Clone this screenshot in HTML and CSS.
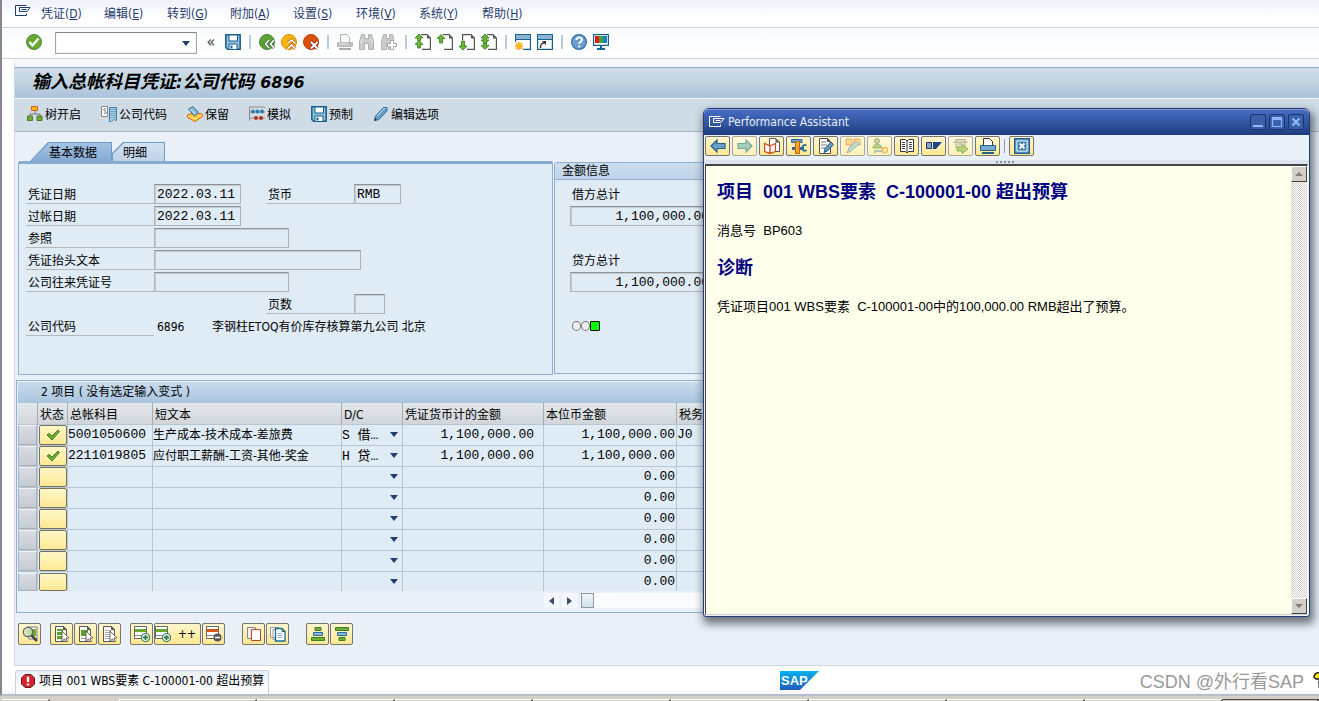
FILE: index.html
```html
<!DOCTYPE html>
<html lang="zh-CN">
<head>
<meta charset="utf-8">
<title>输入总帐科目凭证:公司代码 6896</title>
<link rel="stylesheet" href="styles.css">
</head>
<body>
<svg class="defs" aria-hidden="true">
  <defs>
    <linearGradient id="sapfill" x1="0" y1="0" x2="0" y2="1"><stop offset="0" stop-color="#07b2ee"/><stop offset="1" stop-color="#1d5cbd"/></linearGradient>
    <symbol id="exit" viewBox="0 0 16 16"><path d="M11.500 10.500v2h-11v-10h11M4.500 4.500h10.500l-3 4h-7.500zM6.500 6.500h5" fill="none" stroke="currentColor"/></symbol>
    <symbol id="ok" viewBox="0 0 16 16"><circle cx="8" cy="8" r="7.500" fill="#69a82f" stroke="#4f8a3c"/><path d="M3.500 8l3 3.500 6-7" fill="none" stroke="#fff" stroke-width="2.400"/></symbol>
    <symbol id="save" viewBox="0 0 16 16"><path d="M.8.800h14.400v14.400H2.500L.8 13.500z" fill="#8dbdd8" stroke="#17628f" stroke-width="1.500"/><path d="M4 1h8.500v6H4zM4 10h8v5.500H4z" fill="#fff" stroke="#17628f"/><path d="M5.500 11.500h2v3h-2z" fill="#17628f"/></symbol>
    <symbol id="back" viewBox="0 0 16 16"><circle cx="8" cy="8" r="7.500" fill="#5ba432" stroke="#438838"/><path d="M10 6l-3.500 4L10 14M15 6l-3.500 4L15 14" fill="none" stroke="#4a6a4a" stroke-width="3"/><path d="M10 6l-3.500 4L10 14M15 6l-3.500 4L15 14" fill="none" stroke="#fff" stroke-width="1.500"/></symbol>
    <symbol id="up" viewBox="0 0 16 16"><circle cx="8" cy="8" r="7.500" fill="#fbb40d" stroke="#e28a10"/><path d="M6.500 9.500L10.500 6l4 3.500M6.500 15l4-4 4 4" fill="none" stroke="#ae6a20" stroke-width="3"/><path d="M6.500 9.500L10.500 6l4 3.500M6.500 15l4-4 4 4" fill="none" stroke="#fff" stroke-width="1.500"/></symbol>
    <symbol id="cancel" viewBox="0 0 16 16"><circle cx="8" cy="8" r="7.500" fill="#d8520e" stroke="#ba3d12"/><path d="M8 8l6.500 6.500m0-6.500L8 14.500" stroke="#7b3020" stroke-width="3.600"/><path d="M8 8l6.500 6.500m0-6.500L8 14.500" stroke="#fff" stroke-width="2"/></symbol>
    <symbol id="printgray" viewBox="0 0 16 16"><path d="M3.500 8V.500h6l3 3V8" fill="#fff" stroke="#aaa"/><rect y="8" width="16" height="5" rx="1" fill="#bdbdbd"/><path d="M2 14h12v2H2z" fill="#aaa"/><path d="M2 10h9" stroke="#eee"/></symbol>
    <symbol id="find" viewBox="0 0 16 16"><path d="M2.500.500h3v4h4v-4h3l2 7v8h-5v-6h-4v6h-5v-8z" fill="#ccc" stroke="#b0b0b0"/><path d="M3.500 5l-2 4m10-4l2 4" stroke="#eee"/></symbol>
    <symbol id="findmore" viewBox="0 0 16 16"><path d="M2.500.500h3v4h3v-4h3l1 4v11h-5v-6h-2v6h-5v-8z" fill="#ccc" stroke="#b0b0b0"/><path d="M9.500 6.500h3v3h3v3h-3v3h-3v-3h-3v-3h3z" fill="#fff" stroke="#aaa"/></symbol>
    <symbol id="sheet" viewBox="0 0 16 16"><path d="M6 .600h6l3.400 3.400v11.400H7" fill="#fff" stroke="#555" stroke-width="1.200"/><path d="M12 .500v4h3.500z" fill="#555"/></symbol>
    <symbol id="first" viewBox="0 0 16 16"><use href="#sheet"/><path d="M4 0l4 4H5.500v2.500h-3V4H0zM4 6.500l4 4H5.500V14h-3v-3.500H0z" fill="#6fb52c" stroke="#2f7a2a" stroke-width=".8"/></symbol>
    <symbol id="prev" viewBox="0 0 16 16"><use href="#sheet"/><path d="M4 .500l4 4H5.500V9h-3V4.500H0z" fill="#6fb52c" stroke="#2f7a2a" stroke-width=".8"/></symbol>
    <symbol id="next" viewBox="0 0 16 16"><path d="M3.600 6V.600H12L15.400 4v11.400H8" fill="#fff" stroke="#555" stroke-width="1.200"/><path d="M12 .500v4h3.500z" fill="#555"/><path d="M4 16l4-4H5.500V7h-3v5H0z" fill="#6fb52c" stroke="#2f7a2a" stroke-width=".8"/></symbol>
    <symbol id="last" viewBox="0 0 16 16"><use href="#sheet"/><path d="M4 0l4 4H5.500v2H8l-4 4-4-4h2.500V4H0zM4 15.500l4-4H5.500V9h-3v2.500H0z" fill="#6fb52c" stroke="#2f7a2a" stroke-width=".8"/></symbol>
    <symbol id="win" viewBox="0 0 16 16"><path d="M.6.600h14.800v14.800H.6z" fill="#fff" stroke="#17628f" stroke-width="1.200"/><path d="M1 1h14v4H1z" fill="#8db4d4"/><path d="M1 5.500h14" stroke="#17628f"/></symbol>
    <symbol id="newwin" viewBox="0 0 16 16"><use href="#win"/><path d="M0 8h8v8H0z" fill="#fff"/><path d="M4 8v8M0 12h8M1 9l6 6m0-6l-6 6" stroke="#f59a12" stroke-width="1.400"/><circle cx="4" cy="12" r="2.500" fill="#fdb813"/></symbol>
    <symbol id="shortcut" viewBox="0 0 16 16"><use href="#win"/><path d="M3.500 14c0-4 1-5 4-5" fill="none" stroke="#333" stroke-width="1.500"/><path d="M5 7h4v4z" fill="#333"/></symbol>
    <symbol id="help" viewBox="0 0 16 16"><circle cx="8" cy="8" r="7.400" fill="#6c9ccc" stroke="#346fa8" stroke-width="1.200"/><path d="M5.500 6c0-3.500 5.500-3.300 5.500-.3C11 7.800 8.200 7.500 8.200 10M8.200 11.500v2" fill="none" stroke="#fff" stroke-width="1.900"/></symbol>
    <symbol id="monitor" viewBox="0 0 16 16"><path d="M.6.600h14.800v10.800H.6z" fill="#fff" stroke="#17628f" stroke-width="1.200"/><path d="M2 2h4v7H2z" fill="#e01c12"/><path d="M6 2h4v7H6z" fill="#49a529"/><path d="M10 2h4v7h-4z" fill="#1580d0"/><path d="M7 12h2v2h3v2H4v-2h3z" fill="#17628f"/></symbol>
    <symbol id="tree" viewBox="0 0 16 16"><path d="M8 5v3M3 10V8h10v2" fill="none" stroke="#777"/><path d="M4.500.500h6v4h-6z" fill="#fdb813" stroke="#dd5b1d"/><path d="M.5 10h5v4.500h-5zM10 10h5v4.500h-5z" fill="#72a935" stroke="#467c2c"/></symbol>
    <symbol id="company" viewBox="0 0 16 16"><path d="M.5.500h6v10h-6z" fill="#fff" stroke="#888"/><path d="M4.800 3.200c-2-1-3 .8-1 1.800s2 3-1 2.200" fill="none" stroke="#555"/><path d="M8.500 1.500h7v13l-3-1-2 2h-2z" fill="#a9cde2" stroke="#3d82af"/><path d="M10 3v10M12 3v10M14 3v10" stroke="#3d82af" stroke-dasharray="1 1"/></symbol>
    <symbol id="hold" viewBox="0 0 16 16"><path d="M.5 9L8 6l7.500 2.500v2L8 15.500l-7.500-4z" fill="#fdc22a" stroke="#e2670c"/><path d="M1 10l7 3 7-4" fill="none" stroke="#fff0b0"/><path d="M1.500 3l4.500-2.500 5.500 6-4 3.500z" fill="#8bb8d8" stroke="#316f9f"/><path d="M3 3l5 5" stroke="#dcecf6"/></symbol>
    <symbol id="simulate" viewBox="0 0 16 16"><path d="M.5 15V1h15v1M1 6h15M1 12h15" fill="none" stroke="#888"/><g fill="#287da8"><circle cx="4" cy="5.500" r="1.900"/><circle cx="8.500" cy="5.500" r="1.900"/><circle cx="13" cy="5.500" r="1.900"/></g><g fill="#c02e1b"><circle cx="7" cy="12" r="2"/><circle cx="12" cy="12" r="2"/></g></symbol>
    <symbol id="pencil" viewBox="0 0 16 16"><path d="M1.500 14.500l1-4.500 8-8.500h3.500v3.500l-8 8.500z" fill="#5f9ecb" stroke="#39709c"/><path d="M4 10l8-8" stroke="#cce4f4"/><path d="M1 15l1-3 2 2z" fill="#333"/></symbol>
    <symbol id="check" viewBox="0 0 16 16"><path d="M2 8l2-1.500 3 2.500 6-6 1.500 1.500L7 13z" fill="#69af28" stroke="#49743c"/></symbol>
    <symbol id="page" viewBox="0 0 16 16"><path d="M1.500.500h8l3 3v12h-11z" fill="#fff" stroke="#555"/><path d="M9.500.500v3h3z" fill="#555" stroke="#555"/></symbol>
    <symbol id="cursor" viewBox="0 0 16 16"><path d="M8 5l7 7-3 .3 1.500 3-1.500.7-1.500-3L8 15z" fill="#fff" stroke="#555" stroke-width=".9"/></symbol>
    <symbol id="detail" viewBox="0 0 16 16"><path d="M5 1h10v12H7z" fill="#fff" stroke="#777"/><path d="M7 3h7v7H7z" fill="#70ad2d"/><circle cx="6" cy="6" r="4.700" fill="#cfe4bd" fill-opacity=".8" stroke="#666" stroke-width="1.300"/><path d="M9.500 9.500L15 15" stroke="#444" stroke-width="2.500"/></symbol>
    <symbol id="selall" viewBox="0 0 16 16"><use href="#page"/><path d="M3 3h6v2H3zM3 6h6v3H3zM3 10h6v3H3z" fill="#5aa12c"/><use href="#cursor"/></symbol>
    <symbol id="selblock" viewBox="0 0 16 16"><use href="#page"/><path d="M3 4h7v6H3z" fill="#5aa12c"/><path d="M3 12.500h6" stroke="#999"/><use href="#cursor"/></symbol>
    <symbol id="desel" viewBox="0 0 16 16"><use href="#page"/><path d="M3 4.500h6m-6 2h6m-6 2h6m-6 2h6m-6 2h6" stroke="#aaa"/><use href="#cursor"/></symbol>
    <symbol id="insert" viewBox="0 0 16 16"><path d="M.5.500h12v12H.5z" fill="#fff" stroke="#666"/><path d="M1 3h11v3H1z" fill="#68aa2b"/><path d="M1 9.500h11" stroke="#888"/><circle cx="11.500" cy="11.500" r="4" fill="#fff" stroke="#2f7d4a" stroke-width="1.200"/><path d="M11.500 9v5m-2.500-2.500h5" stroke="#2f7d4a" stroke-width="1.800"/></symbol>
    <symbol id="remove" viewBox="0 0 16 16"><path d="M.5.500h12v12H.5z" fill="#fff" stroke="#666"/><path d="M1 3h11v3H1z" fill="#dc5518"/><path d="M1 9.500h11" stroke="#888"/><circle cx="11.500" cy="11.500" r="4" fill="#555"/><path d="M9 11.500h5" stroke="#fff" stroke-width="1.600"/></symbol>
    <symbol id="copy" viewBox="0 0 16 16"><path d="M1.500 1.500h8v11h-8z" fill="#eee" stroke="#888"/><path d="M5.500 3.500h9v11h-9z" fill="#fff" stroke="#bd412d"/></symbol>
    <symbol id="paste" viewBox="0 0 16 16"><path d="M.5 1.500h8v10h-8zM3 3.500h6v10H3z" fill="#fff" stroke="#999"/><path d="M5.500 2.500h6.500l3 3v9.500H5.500z" fill="#fff" stroke="#176996" stroke-width="1.300"/><path d="M12 2.500v3h3z" fill="#fdb813" stroke="#176996"/><path d="M7.500 7.500h5m-5 2h5m-5 2h5" fill="none" stroke="#86b4d0"/></symbol>
    <symbol id="asc" viewBox="0 0 16 16"><path d="M5 1.500h6v3H5zM1.500 11.500h13v3h-13z" fill="#71ae32" stroke="#397d2d"/><path d="M3.500 6.500h9v3h-9z" fill="#8ab9d8" stroke="#286d9b"/></symbol>
    <symbol id="desc" viewBox="0 0 16 16"><path d="M1.500 1.500h13v3h-13zM5 11.500h6v3H5z" fill="#71ae32" stroke="#397d2d"/><path d="M3.500 6.500h9v3h-9z" fill="#8ab9d8" stroke="#286d9b"/></symbol>
    <symbol id="error" viewBox="0 0 16 16"><path d="M5 1.500h6L14.500 5v6L11 14.500H5L1.500 11V5z" fill="#d92027" stroke="#5e1820"/><path d="M8 3.500v5.500M8 10.500v2" stroke="#fff" stroke-width="2.400"/></symbol>
    <symbol id="left" viewBox="0 0 16 16"><path d="M1 8l6-6v3.500h8v5H7V14z" fill="#67a1cb" stroke="#27608b" stroke-width="1.200"/></symbol>
    <symbol id="right" viewBox="0 0 16 16"><path d="M15 8L9 2v3.500H1v5h8V14z" fill="#91c2b6" stroke="#519596" stroke-width="1.200"/></symbol>
    <symbol id="book" viewBox="0 0 16 16"><path d="M5.500.500h6.500l3.500 3.500v9.500h-10z" fill="#fff" stroke="#555"/><path d="M11.500.500v4h4z" fill="#555"/><path d="M.6 5.500L6 8v7.400L.6 13.500zM11.500 5.500L6 8v7.400l5.500-1.900z" fill="#fff" stroke="#d04a20" stroke-width="1.300"/></symbol>
    <symbol id="tools" viewBox="0 0 16 16"><path d="M.6 1.500h10.400v3H.6z" fill="#6a9fc5" stroke="#286d9b"/><path d="M1 10.500h4M9 10.500h4" stroke="#286d9b" stroke-width="3"/><path d="M4.500 3.500h4v12h-4z" fill="#fba11c" stroke="#bd671d"/><path d="M15.500 7.500c-2.500-1.500-4.500.5-4 3s2.500 3 4 1.500" fill="none" stroke="#286d9b" stroke-width="1.800"/></symbol>
    <symbol id="edit" viewBox="0 0 16 16"><use href="#page"/><path d="M3 4h5M3 7h6M3 10h4" stroke="#777"/><path d="M6 14.500l1-4 6-6.500 2.500 2.500-6 6.500z" fill="#5d9cc5" stroke="#275b80"/></symbol>
    <symbol id="notes" viewBox="0 0 16 16"><path d="M1 1h6v6H1zM9 1h6v6H9z" fill="#ffd878" stroke="#e9904e"/><path d="M2 15l2-5 7-7 3 3-8 7z" fill="#b5d5cf" stroke="#7aaaa4"/></symbol>
    <symbol id="userkey" viewBox="0 0 16 16"><circle cx="5" cy="3" r="2.500" fill="#bdd08d" stroke="#81a361"/><path d="M1 10c0-5 8-5 9 0z" fill="#a9c776" stroke="#7ca95d"/><circle cx="13" cy="12" r="2.600" fill="none" stroke="#f3ab3c" stroke-width="1.500"/><path d="M10 13H3v2" fill="none" stroke="#7fada9" stroke-width="1.600"/></symbol>
    <symbol id="openbook" viewBox="0 0 16 16"><path d="M8 3L6.500 1.500h-5v12h5L8 15l1.500-1.500h5v-12h-5zM8 3v11" fill="#fff" stroke="#333"/><path d="M3 4.500h3m-3 2h3m-3 2h3m-3 2h3m4-6h3m-3 2h3m-3 2h3m-3 2h3" stroke="#444"/></symbol>
    <symbol id="flag" viewBox="0 0 16 16"><path d="M.5 4.500h5v6h-5z" fill="#8aa4cf" stroke="#183568"/><path d="M7 4h9l-6 7H7z" fill="#1d458e"/></symbol>
    <symbol id="transport" viewBox="0 0 16 16"><path d="M3 1.500h9v8H3zM0 4h15M5 6h5" fill="#eee8b4" stroke="#94988b"/><path d="M4 9h5V6.500l6 4.500-6 4.500V13H4z" fill="#a9cc61" stroke="#71a253"/></symbol>
    <symbol id="print" viewBox="0 0 16 16"><path d="M3.500 8V.500h6l3 3V8" fill="#fff" stroke="#333"/><path d="M.5 7.500h15v5H.5z" fill="#75acd0" stroke="#27638e"/><path d="M2 14h12v2H2z" fill="#27638e"/></symbol>
    <symbol id="closebox" viewBox="0 0 16 16"><path d="M.7.700h14.600v14.600H.7z" fill="#7fb4d6" stroke="#21618e" stroke-width="1.400"/><path d="M3 3h10v10H3z" fill="#3d7daa" stroke="#e6f2f8"/><path d="M5.500 5.500l5 5m0-5l-5 5" stroke="#fff" stroke-width="1.800"/></symbol>
  </defs>
</svg>

<div class="window">
  <nav class="menu" aria-label="菜单">
    <button class="menu-icon" aria-label="系统菜单"><svg class="icon"><use href="#exit"/></svg></button>
    <button class="menu-item">凭证(<u>D</u>)</button>
    <button class="menu-item">编辑(<u>E</u>)</button>
    <button class="menu-item">转到(<u>G</u>)</button>
    <button class="menu-item">附加(<u>A</u>)</button>
    <button class="menu-item">设置(<u>S</u>)</button>
    <button class="menu-item">环境(<u>V</u>)</button>
    <button class="menu-item">系统(<u>Y</u>)</button>
    <button class="menu-item">帮助(<u>H</u>)</button>
  </nav>

  <div class="toolbar">
    <button class="flat" aria-label="回车"><svg class="icon"><use href="#ok"/></svg></button>
    <div class="combo">
      <input type="text" aria-label="命令">
      <button class="flat combo-arrow" aria-label="打开列表"><i class="triangle"></i></button>
    </div>
    <button class="flat collapse" aria-label="收起">«</button>
    <button class="flat" aria-label="保存"><svg class="icon"><use href="#save"/></svg></button>
    <i class="sep"></i>
    <button class="flat" aria-label="返回"><svg class="icon"><use href="#back"/></svg></button>
    <button class="flat" aria-label="退出"><svg class="icon"><use href="#up"/></svg></button>
    <button class="flat" aria-label="取消"><svg class="icon"><use href="#cancel"/></svg></button>
    <i class="sep"></i>
    <button class="flat" aria-label="打印"><svg class="icon"><use href="#printgray"/></svg></button>
    <button class="flat" aria-label="查找"><svg class="icon"><use href="#find"/></svg></button>
    <button class="flat" aria-label="继续查找"><svg class="icon"><use href="#findmore"/></svg></button>
    <i class="sep"></i>
    <button class="flat" aria-label="第一页"><svg class="icon"><use href="#first"/></svg></button>
    <button class="flat" aria-label="上一页"><svg class="icon"><use href="#prev"/></svg></button>
    <button class="flat" aria-label="下一页"><svg class="icon"><use href="#next"/></svg></button>
    <button class="flat" aria-label="最后一页"><svg class="icon"><use href="#last"/></svg></button>
    <i class="sep"></i>
    <button class="flat" aria-label="新窗口"><svg class="icon"><use href="#newwin"/></svg></button>
    <button class="flat" aria-label="快捷方式"><svg class="icon"><use href="#shortcut"/></svg></button>
    <i class="sep"></i>
    <button class="flat" aria-label="帮助"><svg class="icon"><use href="#help"/></svg></button>
    <button class="flat" aria-label="布局"><svg class="icon"><use href="#monitor"/></svg></button>
  </div>

  <main class="screen">
    <h1 class="title">输入总帐科目凭证:公司代码 <span class="title-code">6896</span></h1>
    <div class="actions">
      <button class="action"><svg class="icon"><use href="#tree"/></svg>树开启</button>
      <button class="action"><svg class="icon"><use href="#company"/></svg>公司代码</button>
      <button class="action"><svg class="icon"><use href="#hold"/></svg>保留</button>
      <button class="action"><svg class="icon"><use href="#simulate"/></svg>模拟</button>
      <button class="action"><svg class="icon"><use href="#save"/></svg>预制</button>
      <button class="action"><svg class="icon"><use href="#pencil"/></svg>编辑选项</button>
    </div>

    <div class="panels">
      <section class="basic">
        <div class="tabs" role="tablist">
          <button class="tab tab-active" role="tab" aria-selected="true">基本数据</button>
          <button class="tab tab-second" role="tab" aria-selected="false">明细</button>
        </div>
        <div class="tab-panel">
          <div class="field"><label class="label" for="docdate">凭证日期</label><input class="box w-date" id="docdate" value="2022.03.11" readonly>
            <label class="label label-mid" for="currency">货币</label><input class="box w-cur" id="currency" value="RMB" readonly></div>
          <div class="field"><label class="label" for="postdate">过帐日期</label><input class="box w-date" id="postdate" value="2022.03.11" readonly></div>
          <div class="field"><label class="label" for="ref">参照</label><input class="box w-ref" id="ref"></div>
          <div class="field"><label class="label" for="headtext">凭证抬头文本</label><input class="box w-text" id="headtext"></div>
          <div class="field"><label class="label" for="cross">公司往来凭证号</label><input class="box w-ref" id="cross"></div>
          <div class="field field-right"><label class="label label-mid" for="pages">页数</label><input class="box w-page" id="pages"></div>
          <div class="field"><span class="label">公司代码</span><span class="code">6896</span><span>李钢柱ETOQ有价库存核算第九公司 北京</span></div>
        </div>
      </section>
      <section class="amounts">
        <h2 class="amounts-title">金额信息</h2>
        <div class="amounts-body">
          <label class="amount-label" for="debit">借方总计</label>
          <input class="box amount" id="debit" value="1,100,000.00" readonly>
          <label class="amount-label amount-second" for="credit">贷方总计</label>
          <input class="box amount" id="credit" value="1,100,000.00" readonly>
          <div class="lights"><i class="light"></i><i class="light"></i><i class="light-on"></i></div>
        </div>
      </section>
    </div>

    <section class="items">
      <h2 class="items-title">2 项目 ( 没有选定输入变式 )</h2>
      <table class="grid">
        <colgroup><col class="c-sel"><col class="c-stat"><col class="c-acct"><col class="c-text"><col class="c-dc"><col class="c-amt"><col class="c-loc"><col></colgroup>
        <thead><tr><th></th><th>状态</th><th>总帐科目</th><th>短文本</th><th>D/C</th><th>凭证货币计的金额</th><th>本位币金额</th><th>税务</th></tr></thead>
        <tbody>
          <tr><td><button class="rowsel" aria-label="选择行"></button></td><td><button class="state" aria-label="正确"><svg class="icon"><use href="#check"/></svg></button></td><td class="mono">5001050600</td><td>生产成本-技术成本-差旅费</td><td class="dc"><select aria-label="D/C"><option>S 借…</option></select></td><td class="mono num num-doc">1,100,000.00</td><td class="mono num">1,100,000.00</td><td class="mono">J0</td></tr>
          <tr><td><button class="rowsel" aria-label="选择行"></button></td><td><button class="state" aria-label="正确"><svg class="icon"><use href="#check"/></svg></button></td><td class="mono">2211019805</td><td>应付职工薪酬-工资-其他-奖金</td><td class="dc"><select aria-label="D/C"><option>H 贷…</option></select></td><td class="mono num num-doc">1,100,000.00</td><td class="mono num">1,100,000.00</td><td></td></tr>
          <tr><td><button class="rowsel" aria-label="选择行"></button></td><td><button class="state" aria-label="状态"></button></td><td></td><td></td><td class="dc"><select aria-label="D/C"><option></option></select></td><td></td><td class="mono num">0.00</td><td></td></tr>
          <tr><td><button class="rowsel" aria-label="选择行"></button></td><td><button class="state" aria-label="状态"></button></td><td></td><td></td><td class="dc"><select aria-label="D/C"><option></option></select></td><td></td><td class="mono num">0.00</td><td></td></tr>
          <tr><td><button class="rowsel" aria-label="选择行"></button></td><td><button class="state" aria-label="状态"></button></td><td></td><td></td><td class="dc"><select aria-label="D/C"><option></option></select></td><td></td><td class="mono num">0.00</td><td></td></tr>
          <tr><td><button class="rowsel" aria-label="选择行"></button></td><td><button class="state" aria-label="状态"></button></td><td></td><td></td><td class="dc"><select aria-label="D/C"><option></option></select></td><td></td><td class="mono num">0.00</td><td></td></tr>
          <tr><td><button class="rowsel" aria-label="选择行"></button></td><td><button class="state" aria-label="状态"></button></td><td></td><td></td><td class="dc"><select aria-label="D/C"><option></option></select></td><td></td><td class="mono num">0.00</td><td></td></tr>
          <tr><td><button class="rowsel" aria-label="选择行"></button></td><td><button class="state" aria-label="状态"></button></td><td></td><td></td><td class="dc"><select aria-label="D/C"><option></option></select></td><td></td><td class="mono num">0.00</td><td></td></tr>
        </tbody>
      </table>
      <div class="hscroll">
        <button class="hs-btn" aria-label="向左"><i class="tri-left"></i></button>
        <button class="hs-btn" aria-label="向右"><i class="tri-right"></i></button>
        <div class="hs-track"><i class="hs-thumb"></i></div>
      </div>
    </section>

    <div class="item-actions">
      <div class="group"><button class="gold" aria-label="明细"><svg class="icon"><use href="#detail"/></svg></button></div>
      <div class="group"><button class="gold" aria-label="全选"><svg class="icon"><use href="#selall"/></svg></button><button class="gold" aria-label="选择块"><svg class="icon"><use href="#selblock"/></svg></button><button class="gold" aria-label="取消选择"><svg class="icon"><use href="#desel"/></svg></button></div>
      <div class="group group-wide"><button class="gold" aria-label="插入行"><svg class="icon"><use href="#insert"/></svg></button><button class="gold gold-long"><svg class="icon"><use href="#insert"/></svg><span>++</span></button><button class="gold" aria-label="删除行"><svg class="icon"><use href="#remove"/></svg></button></div>
      <div class="group group-wide"><button class="gold" aria-label="复制"><svg class="icon"><use href="#copy"/></svg></button><button class="gold" aria-label="复制字段"><svg class="icon"><use href="#paste"/></svg></button></div>
      <div class="group"><button class="gold" aria-label="升序"><svg class="icon"><use href="#asc"/></svg></button><button class="gold" aria-label="降序"><svg class="icon"><use href="#desc"/></svg></button></div>
    </div>
  </main>

  <footer class="status">
    <div class="message"><svg class="icon"><use href="#error"/></svg>项目 001 WBS要素 C-100001-00 超出预算</div>
    <svg class="logo" viewBox="0 0 39 19" role="img" aria-label="SAP"><path d="M0 0h39L20 19H0z" fill="url(#sapfill)"/><text class="logo-text" x="1" y="14">SAP</text></svg>
    <div class="watermark">CSDN @外行看SAP</div>
    <div class="assist"><svg width="16" height="16" viewBox="0 0 16 16"><path d="M1 5.500C1 1 5 0 8 1s5 2 5 6-3 4-3 5H6V9l3-2-1-2-2 2H3z" fill="#ffe800" stroke="#111" stroke-width="1.300"/><path d="M6 13h4v3H6z" fill="#ffe800" stroke="#111"/></svg></div>
  </footer>
</div>
<div class="taskbar"><i class="quick"></i><i class="task"></i><i class="task"></i><i class="task"></i><i class="task"></i><i class="task"></i><i class="task"></i><i class="task"></i><i class="task"></i><i class="task-on"></i></div>

<section class="dialog" role="dialog" aria-labelledby="dlgtitle">
  <header class="dlg-head">
    <svg class="icon"><use href="#exit"/></svg>
    <span class="dlg-title" id="dlgtitle">Performance Assistant</span>
    <button class="wbtn" aria-label="最小化"><svg viewBox="0 0 14 14"><path d="M2 11h10" stroke="#8bb5ff" stroke-width="2"/></svg></button>
    <button class="wbtn" aria-label="最大化"><svg viewBox="0 0 14 14"><path d="M2.500 3v8.500h9V3M2 3.500h10" fill="none" stroke="#8bb5ff" stroke-width="1.200"/><path d="M2 2h10v3H2z" fill="#8bb5ff"/></svg></button>
    <button class="wbtn" aria-label="关闭"><svg viewBox="0 0 14 14"><path d="M3.500 3.500l7 7m0-7l-7 7" stroke="#8bb5ff" stroke-width="2.400"/></svg></button>
  </header>
  <div class="dlg-tools">
    <button class="gold" aria-label="后退"><svg class="icon"><use href="#left"/></svg></button>
    <button class="gold dim" aria-label="前进"><svg class="icon"><use href="#right"/></svg></button>
    <button class="gold" aria-label="应用帮助"><svg class="icon"><use href="#book"/></svg></button>
    <button class="gold" aria-label="定制"><svg class="icon"><use href="#tools"/></svg></button>
    <button class="gold" aria-label="编辑"><svg class="icon"><use href="#edit"/></svg></button>
    <button class="gold dim" aria-label="注释"><svg class="icon"><use href="#notes"/></svg></button>
    <button class="gold dim" aria-label="权限"><svg class="icon"><use href="#userkey"/></svg></button>
    <button class="gold" aria-label="词汇表"><svg class="icon"><use href="#openbook"/></svg></button>
    <button class="gold" aria-label="技术信息"><svg class="icon"><use href="#flag"/></svg></button>
    <button class="gold dim" aria-label="转移"><svg class="icon"><use href="#transport"/></svg></button>
    <button class="gold" aria-label="打印"><svg class="icon"><use href="#print"/></svg></button>
    <i class="dlg-sep"></i>
    <button class="gold" aria-label="关闭帮助"><svg class="icon"><use href="#closebox"/></svg></button>
  </div>
  <div class="grip"></div>
  <div class="dlg-body">
    <article class="doc">
      <h2>项目&nbsp; 001 WBS要素&nbsp; C-100001-00 超出预算</h2>
      <p>消息号&nbsp; BP603</p>
      <h2>诊断</h2>
      <p>凭证项目001 WBS要素&nbsp; C-100001-00中的100,000.00 RMB超出了预算。</p>
    </article>
    <div class="vscroll"><button class="vs-btn" aria-label="向上"><i class="tri-up"></i></button><button class="vs-btn" aria-label="向下"><i class="tri-down"></i></button></div>
  </div>
</section>
</body>
</html>
```
FILE: styles.css
```css
* { box-sizing: border-box; }
html, body { height: 100%; }
body {
  margin: 0;
  display: flex;
  flex-direction: column;
  position: relative;
  overflow: hidden;
  background: #fff;
  color: #000;
  font: 12px/16px "DejaVu Sans Condensed", "Noto Sans", "Noto Sans CJK SC", sans-serif;
}
button, input, select { font: inherit; color: inherit; border-radius: 0; }
button { padding: 0; border: 0; background: none; }
h1, h2, p { margin: 0; font-weight: normal; }
.defs { position: absolute; width: 0; height: 0; }
.icon { width: 16px; height: 16px; flex: none; display: block; }

.window {
  flex: 1;
  min-height: 0;
  display: flex;
  flex-direction: column;
  border-left: 2px solid #85878b;
  border-bottom: 2px solid #b4bfca;
}

/* Menu and system toolbar */
.menu {
  height: 28px;
  flex: none;
  display: flex;
  align-items: center;
  padding-left: 12px;
  background: linear-gradient(#eef3fa, #fff 70%);
  border-bottom: 1px solid #cdd6df;
  color: #1f3a6e;
}
.menu-icon { width: 27px; padding: 0 0 6px 1px; }
.menu-item { flex: 0 1 63px; text-align: left; }
.toolbar {
  height: 31px;
  flex: none;
  display: flex;
  align-items: center;
  gap: 6px;
  padding-left: 24px;
  padding-bottom: 4px;
  background: linear-gradient(#fafbfd, #fff);
  border-bottom: 1px solid #cdd6df;
}
.combo {
  width: 142px;
  height: 22px;
  margin: 4px 0 0 7px;
  display: flex;
  border: 1px solid #a2a4a8;
  border-top-color: #85878b;
  box-shadow: inset 0 0 1px #a2a4a8;
  background: #fff;
}
.combo input { flex: 1; min-width: 0; border: 0; padding: 0 4px; outline: 0; background: none; }
.combo-arrow { width: 20px; display: flex; align-items: center; justify-content: center; }
.triangle { border: 4px solid transparent; border-top: 5px solid #223d70; border-bottom: 0; }
.flat { margin-top: 2px; }
.combo .flat { margin-top: 0; }
.collapse { width: 16px; font-size: 16px; color: #444; line-height: 14px; }
.sep { width: 2px; height: 14px; margin: 2px 2px 0; background: #bacbdc; }

/* Screen */
.screen {
  flex: 1;
  min-height: 0;
  margin: 0 0 0 12px;
  border-left: 1px solid #ccd8e8;
  border-bottom: 1px solid #cdd6df;
  border-top: 8px solid #f3f7fb;
  background: #e9f0f7;
}
.title {
  height: 31px;
  padding: 0 17px;
  border-top: 1px solid #93a9c1;
  background: linear-gradient(#cfdfec, #c3d3e0 45%, #aac2dd);
  font-size: 18px;
  line-height: 27px;
  font-weight: bold;
  font-style: italic;
}
.title-code { font-family: "DejaVu Sans", sans-serif; font-size: 16px; }
.actions {
  height: 34px;
  display: flex;
  align-items: center;
  gap: 20px;
  padding-left: 12px;
  border-top: 1px solid #f2f6fa;
  border-bottom: 1px solid #a0b3c7;
  background: #cfdce6;
}
.action { display: flex; align-items: center; gap: 2px; }
.action .icon { margin-bottom: 2px; }

.panels { display: flex; gap: 1px; padding: 10px 12px 0 3px; }
.basic { flex: 0 0 535px; display: flex; flex-direction: column; }
.tabs { display: flex; padding-left: 12px; height: 19px; }
.tab {
  position: relative;
  isolation: isolate;
  height: 19px;
  text-align: left;
  background: #6f9bc6;
  line-height: 22px;
}
.tab::before {
  content: "";
  position: absolute;
  inset: 1px 1px 0 1px;
  z-index: -1;
}
.tab-active { width: 82px; padding-left: 19px; clip-path: polygon(18px 0, 100% 0, 100% 100%, 0 100%); }
.tab-active::before { background: linear-gradient(#a3c3e5, #86aad4); clip-path: polygon(18px 0, 100% 0, 100% 100%, 0 100%); }
.tab-second { width: 53px; padding-left: 11px; clip-path: polygon(11px 0, 100% 0, 100% 100%, 0 100%, 0 11px); }
.tab-second::before { background: linear-gradient(#d3e2f0, #bdd2e8); clip-path: polygon(11px 0, 100% 0, 100% 100%, 0 100%, 0 11px); }
.tab-panel {
  min-height: 214px;
  display: flex;
  flex-direction: column;
  gap: 2px;
  padding: 20px 7px 8px;
  border: 1px solid #8fb0d3;
  border-top: 3px solid #85abd3;
  border-radius: 2px 2px 0 0;
  background: #dfebf5;
}
.field { display: flex; height: 20px; }
.field-right { padding-left: 240px; }
.field > span { line-height: 22px; }
.label {
  width: 128px;
  flex: none;
  padding-left: 2px;
  border-bottom: 1px solid #b4b8bb;
  line-height: 22px;
}
.label-mid { width: 88px; }
.w-date + .label-mid { margin-left: 25px; }
.code { width: 58px; padding-left: 3px; }
.box {
  height: 20px;
  padding: 0 2px;
  border: 1px solid #b0b2b4;
  border-top-color: #8e9194;
  box-shadow: inset 1px 1px 1px #c2cbd2;
  background: #dfebf5;
  outline: 0;
  font: 13px/18px "Liberation Mono", monospace;
}
.w-date { width: 87px; }
.w-cur { width: 47px; }
.w-ref { width: 135px; }
.w-text { width: 207px; }
.w-page { width: 31px; }

.amounts {
  flex: 1;
  margin: 20px 0 1px;
  border: 1px solid #8fb0d3;
  border-radius: 3px 3px 0 0;
  background: #dfebf5;
}
.amounts-title {
  height: 17px;
  padding-left: 7px;
  border-bottom: 1px solid #8fb0d3;
  background: linear-gradient(#cdddee, #bfd4e9);
  font-size: 12px;
  line-height: 17px;
}
.amounts-body { display: flex; flex-direction: column; align-items: flex-start; gap: 2px; padding: 4px 15px; }
.amount-label { height: 20px; padding-left: 2px; line-height: 22px; }
.amount-second { margin-top: 22px; }
.amount { width: 142px; text-align: right; }
.lights { display: flex; margin: 27px 0 0 2px; }
.light, .light-on { width: 10px; height: 10px; border: 1px solid #777; border-radius: 50%; background: #eee; }
.light { width: 9px; }
.light-on { border-color: #000; border-radius: 1px; background: #0f0; }

/* Line items */
.items { margin: 5px 12px 0 1px; padding: 1px; border: 1px solid #8fb0d3; }
.items-title {
  height: 21px;
  padding-left: 23px;
  background: linear-gradient(#c9dcec, #aac4df);
  font-size: 12px;
  line-height: 20px;
  word-spacing: 0;
}
.grid { width: 100%; table-layout: fixed; border-spacing: 0; }
.c-sel { width: 20px; }
.c-stat { width: 30px; }
.c-acct { width: 85px; }
.c-text { width: 189px; }
.c-dc { width: 61px; }
.c-amt { width: 141px; }
.c-loc { width: 133px; }
.grid th {
  height: 22px;
  padding: 2px 0 0 2px;
  text-align: left;
  font-weight: normal;
  white-space: nowrap;
  border-right: 1px solid #a3adb8;
  border-bottom: 1px solid #b8c4ce;
  background: linear-gradient(#e4e8eb, #d0d5da);
  line-height: 18px;
}
.grid td {
  height: 21px;
  padding: 0;
  border-right: 1px solid #b8c6d4;
  border-bottom: 1px solid #b8c6d4;
  background: #dfebf5;
  line-height: 20px;
  white-space: nowrap;
}
.grid tr:last-child td { height: 19px; border-bottom: 0; line-height: 18px; }
.grid td.mono, .dc select { font-family: "Liberation Mono", "Noto Sans CJK SC", monospace; font-size: 13px; }
.grid td.num { text-align: right; padding-right: 1px; }
.grid td.num-doc { padding-right: 9px; }
.rowsel {
  display: block;
  width: 19px;
  height: 20px;
  border: 1px solid #a9b1bd;
  border-top-color: #f0f3f6;
  background: linear-gradient(#d8dce2, #c5cbd5);
}
.state {
  display: flex;
  align-items: center;
  justify-content: center;
  width: 28px;
  height: 20px;
  margin-left: 1px;
  border: 1px solid #74725f;
  border-radius: 2px;
  background: linear-gradient(#fff7c8, #ffe994);
}
tr:last-child .rowsel, tr:last-child .state { height: 18px; }
.dc { position: relative; }
.dc select { display: block; width: 100%; height: 18px; padding: 0; border: 0; outline: 0; appearance: none; background: none; }
.dc::after {
  content: "";
  position: absolute;
  right: 4px;
  top: 7px;
  border: 4px solid transparent;
  border-top: 5px solid #223d70;
  border-bottom: 0;
  pointer-events: none;
}
.hscroll { display: flex; gap: 3px; padding: 2px 0 3px 526px; height: 20px; }
.hs-btn { width: 15px; background: #f3f6fa; display: flex; align-items: center; justify-content: center; }
.tri-left { border: 4px solid transparent; border-right: 5px solid #3c5068; border-left: 0; }
.tri-right { border: 4px solid transparent; border-left: 5px solid #3c5068; border-right: 0; }
.hs-track { flex: 1; margin-left: 1px; background: #fafbfc; }
.hs-thumb { display: block; width: 13px; height: 15px; border: 1px solid #8b9aaa; background: linear-gradient(#f2f6fa, #d3dee8); }

.item-actions { display: flex; gap: 9px; padding: 10px 0 0 3px; }
.group { display: flex; gap: 1px; }
.group-wide { margin-right: 8px; }
.gold {
  width: 23px;
  height: 22px;
  display: flex;
  align-items: center;
  justify-content: center;
  border: 1px solid #77756a;
  border-radius: 2px;
  background: linear-gradient(#fff6cf, #ffe892);
}
.gold-long { width: 47px; justify-content: space-between; padding: 0 4px 0 0; }

/* Status bar */
.status {
  height: 28px;
  flex: none;
  display: grid;
  grid-template-columns: 765px 1fr auto 10px;
  align-items: center;
  padding-left: 13px;
  background: linear-gradient(#fff 70%, #f5f6f8);
}
.message {
  height: 24px;
  justify-self: start;
  align-self: end;
  display: flex;
  align-items: center;
  gap: 3px;
  padding: 0 4px 3px;
  border: 1px solid #c6d1e0;
  border-bottom: 0;
  border-radius: 3px 3px 0 0;
  background: linear-gradient(#eaf0f7, #fff);
}
.logo { width: 39px; height: 19px; }
.logo-text { font: bold 13px "Liberation Sans", sans-serif; fill: #fff; }
.watermark { padding: 4px 5px 0 0; color: #999; font: 18px/24px "Liberation Sans", "Noto Sans CJK SC", sans-serif; }
.assist { overflow: hidden; width: 6px; height: 16px; justify-self: end; }

/* Taskbar edge */
.taskbar { height: 5px; flex: none; display: flex; padding-top: 3px; background: #d4d0c8; overflow: hidden; }
.quick, .task, .task-on { flex: none; border-top: 1px solid #fff; border-right: 2px solid #5b5955; }
.quick { width: 48px; margin: 0 69px 0 2px; }
.task { width: 138px; border-left: 1px solid #fff; }
.task-on { flex: 1; border-top-color: #444; }

/* Performance Assistant window */
.dialog {
  position: absolute;
  left: 703px;
  right: 9px;
  top: 108px;
  bottom: 84px;
  display: flex;
  flex-direction: column;
  border: 1px solid #223c74;
  border-radius: 6px 6px 3px 3px;
  background: #e9f0f7;
  box-shadow: 2px 5px 9px 2px rgba(45, 50, 60, .65);
}
.dlg-head {
  height: 26px;
  flex: none;
  display: flex;
  align-items: center;
  gap: 3px;
  padding: 0 5px 2px;
  border-top: 1px solid #7f9bdc;
  border-radius: 5px 5px 0 0;
  background: linear-gradient(#476bc4, #31559f 55%, #1c3a7b);
  color: #fff;
}
.dlg-title { flex: 1; color: #e6ecf8; }
.wbtn { width: 16px; height: 16px; border: 1px solid #1a3470; border-radius: 2px; background: #3b60a8; }
.wbtn svg { display: block; }
.dlg-tools { display: flex; gap: 2px; padding: 1px 1px 0; }
.dlg-tools .gold { width: 25px; height: 20px; }
.gold.dim { border-color: #aba98f; background: linear-gradient(#fff9de, #fff0b8); }
.dim .icon { opacity: .8; }
.dlg-sep { width: 1px; height: 14px; margin: 3px 2px 0; background: #909aa4; }
.grip { height: 8px; flex: none; background: #dbe4ec; background-clip: content-box; padding-top: 4px; position: relative; }
.grip::after {
  content: "";
  position: absolute;
  left: 50%;
  bottom: 1px;
  width: 18px;
  height: 2px;
  margin-left: -11px;
  background: repeating-linear-gradient(90deg, #8b959e 0 2px, transparent 2px 4px);
}
.dlg-body {
  flex: 1;
  min-height: 0;
  display: flex;
  margin: 0 1px 1px;
  border: 1px solid #444;
  border-width: 2px 1px 1px;
  border-right-color: #fff;
  border-bottom-color: #d4d0c8;
  background: #ffffec;
}
.doc { flex: 1; padding: 14px 11px; font: 13px/20px "Liberation Sans", "Noto Sans CJK SC", sans-serif; }
.doc h2 { color: #000080; font-size: 18px; font-weight: bold; line-height: 24px; }
.doc p { margin: 17px 0 15px; }
.vscroll {
  width: 16px;
  display: flex;
  flex-direction: column;
  justify-content: space-between;
  background: repeating-conic-gradient(#d4d0c8 0 25%, #fff 0 50%) 0 0 / 2px 2px;
}
.vs-btn {
  height: 16px;
  display: flex;
  align-items: center;
  justify-content: center;
  border: 1px solid #fff;
  border-right-color: #444;
  border-bottom-color: #444;
  background: #d4d0c8;
}
.tri-up { border: 4px solid transparent; border-bottom-color: #808080; border-top: 0; }
.tri-down { border: 4px solid transparent; border-top-color: #808080; border-bottom: 0; }
```
